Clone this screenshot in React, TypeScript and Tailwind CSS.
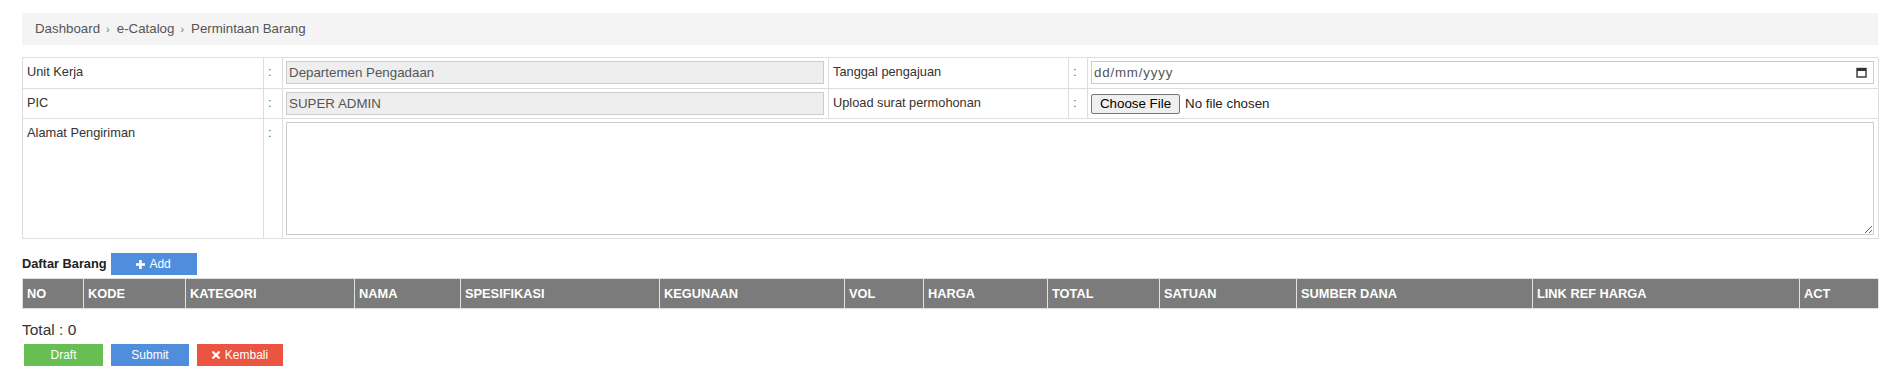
import React from "react";

const headers: [string, number][] = [
  ["NO", 61],
  ["KODE", 102],
  ["KATEGORI", 169],
  ["NAMA", 106],
  ["SPESIFIKASI", 199],
  ["KEGUNAAN", 185],
  ["VOL", 79],
  ["HARGA", 124],
  ["TOTAL", 112],
  ["SATUAN", 137],
  ["SUMBER DANA", 236],
  ["LINK REF HARGA", 267],
  ["ACT", 79],
];

function PlusIcon() {
  return (
    <svg width="9" height="9" viewBox="0 0 9 9" fill="white">
      <rect x="3.2" y="0" width="2.6" height="9" />
      <rect x="0" y="3.2" width="9" height="2.6" />
    </svg>
  );
}

function TimesIcon() {
  return (
    <svg width="8" height="8" viewBox="0 0 8 8" stroke="white" strokeWidth="2.2" strokeLinecap="round">
      <line x1="1.2" y1="1.2" x2="6.8" y2="6.8" />
      <line x1="6.8" y1="1.2" x2="1.2" y2="6.8" />
    </svg>
  );
}

function CalendarIcon() {
  return (
    <svg width="11" height="11" viewBox="0 0 11 11">
      <rect x="1" y="1.5" width="9" height="8.5" fill="none" stroke="#333" strokeWidth="1.4" />
      <rect x="1" y="1" width="9" height="3" fill="#333" />
    </svg>
  );
}

export default function App() {
  const cell = "border-r border-b border-[#ddd]";
  const label = `${cell} pl-[4px] pt-[6px] leading-[15px]`;
  const colon = `${cell} pl-[4px] pt-[6px] leading-[15px] text-[#666]`;
  return (
    <div className="min-h-screen bg-white pl-[22px] pr-[15px] pt-[13px] font-['Liberation_Sans',Arial,sans-serif]">
      <div className="flex h-[32px] items-center bg-[#f4f4f4] pl-[13px] text-[13.3px] text-[#555]">
        <span>Dashboard</span>
        <span className="ml-[6px] mr-[7px] text-[11px] text-[#777]">›</span>
        <span>e-Catalog</span>
        <span className="ml-[6px] mr-[7px] text-[11px] text-[#777]">›</span>
        <span>Permintaan Barang</span>
      </div>

      <div className="mt-[12px] grid grid-cols-[241px_19px_546px_240px_19px_791px] grid-rows-[31px_30px_120px] border-l border-t border-[#ddd] text-[12.8px] text-[#333]">
        <div className={label}>Unit Kerja</div>
        <div className={colon}>:</div>
        <div className={`${cell} pl-[3px] pt-[3px]`}>
          <input
            readOnly
            value="Departemen Pengadaan"
            className="block h-[23px] w-[538px] border border-[#ccc] bg-[#eee] px-[2px] text-[13.33px] text-[#555] outline-none"
          />
        </div>
        <div className={label}>Tanggal pengajuan</div>
        <div className={colon}>:</div>
        <div className={`${cell} pl-[3px] pt-[3px]`}>
          <div className="flex h-[23px] w-[783px] items-center justify-between border border-[#ccc] bg-white pl-[2px] pr-[6px]">
            <span className="text-[13.33px] tracking-[0.8px] text-[#555]">dd/mm/yyyy</span>
            <CalendarIcon />
          </div>
        </div>

        <div className={label}>PIC</div>
        <div className={colon}>:</div>
        <div className={`${cell} pl-[3px] pt-[3px]`}>
          <input
            readOnly
            value="SUPER ADMIN"
            className="block h-[23px] w-[538px] border border-[#ccc] bg-[#eee] px-[2px] text-[13.33px] text-[#555] outline-none"
          />
        </div>
        <div className={label}>Upload surat permohonan</div>
        <div className={colon}>:</div>
        <div className={`${cell} flex items-center pl-[3px]`}>
          <button className="h-[20px] w-[89px] rounded-[2px] border border-[#767676] bg-[#efefef] text-[13.33px] leading-[18px] text-black">
            Choose File
          </button>
          <span className="ml-[5px] text-[13.33px] text-[#222]">No file chosen</span>
        </div>

        <div className={label}>Alamat Pengiriman</div>
        <div className={colon}>:</div>
        <div className={`${cell} col-span-4 pl-[3px] pt-[3px]`}>
          <textarea className="block h-[113px] w-[1588px] border border-[#ccc] bg-white outline-none" />
        </div>
      </div>

      <div className="mt-[14px] flex h-[22px] items-center">
        <span className="text-[12.8px] font-bold text-[#222]">Daftar Barang</span>
        <button className="ml-[4px] flex h-[22px] w-[86px] items-center justify-center gap-[4px] bg-[#4f8edc] text-[12px] text-white">
          <PlusIcon />
          <span>Add</span>
        </button>
      </div>

      <div className="mt-[3px] flex border-b border-l border-t border-[#ddd] bg-[#7b7b7b]">
        {headers.map(([h, w]) => (
          <div
            key={h}
            style={{ width: w }}
            className="flex h-[29px] shrink-0 items-center border-r border-[#e2e2e2] pl-[4px] text-[12.8px] font-bold text-white"
          >
            {h}
          </div>
        ))}
      </div>

      <div className="mt-[12px] text-[15.5px] leading-[18px] text-[#333]">Total : 0</div>

      <div className="mt-[5px] flex gap-[8px] pl-[2px]">
        <button className="flex h-[22px] w-[79px] items-center justify-center bg-[#67be53] text-[12px] text-white">
          Draft
        </button>
        <button className="flex h-[22px] w-[78px] items-center justify-center bg-[#4f8edc] text-[12px] text-white">
          Submit
        </button>
        <button className="flex h-[22px] w-[86px] items-center justify-center gap-[5px] bg-[#ea5441] text-[12px] text-white">
          <TimesIcon />
          <span>Kembali</span>
        </button>
      </div>
    </div>
  );
}
